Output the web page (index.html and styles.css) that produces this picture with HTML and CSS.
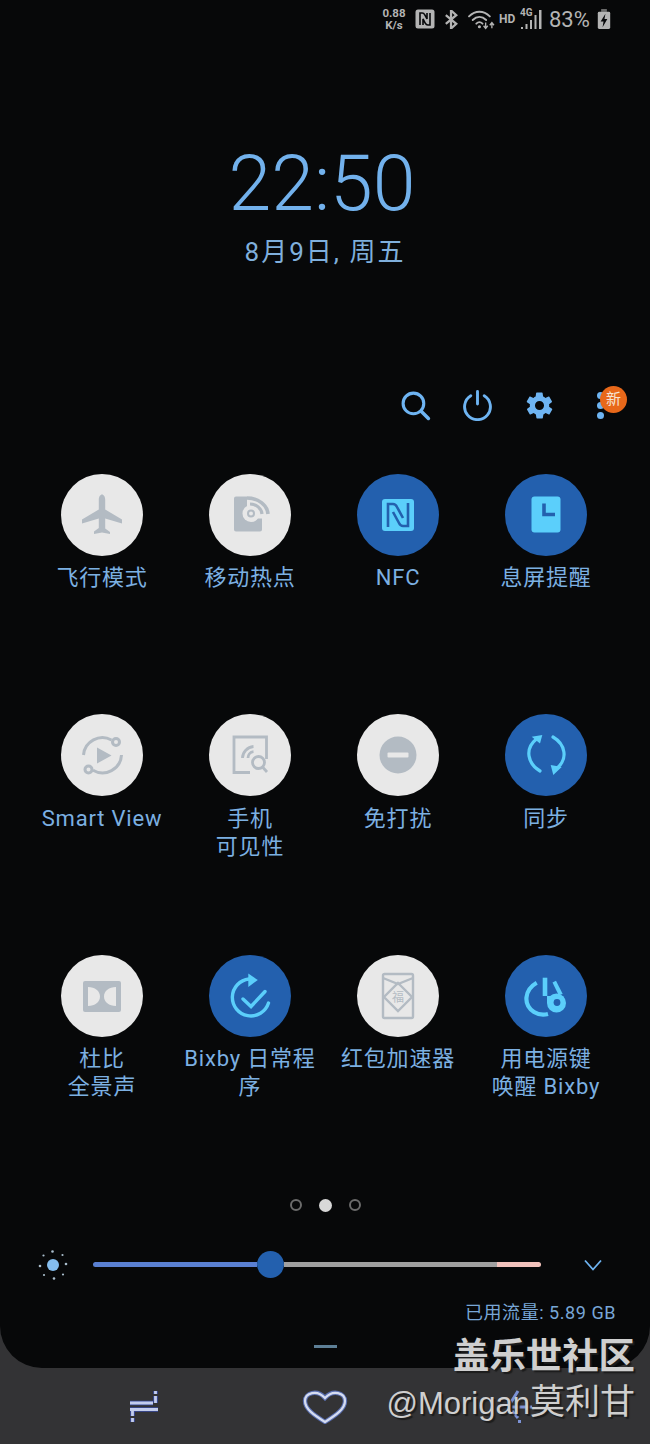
FILE: index.html
```html
<!DOCTYPE html>
<html lang="zh-CN">
  <head>
    <meta charset="UTF-8">
    <meta name="viewport" content="width=device-width, initial-scale=1.0">
    <title>Quick Panel</title>
    <link rel="stylesheet" href="styles.css">
  </head>
  <body>
  <div class="panel">
    <div class="status-bar">
      <div class="net-speed"><span>0.88</span><span>K/s</span></div>
      <svg class="st-nfc" viewBox="0 0 20 20"><rect x="0.5" y="0.5" width="19" height="19" rx="2.5" fill="#b4b4b4"/><path d="M5 16V4h2.200c1.400 0 2 .8 2.600 1.900l2.200 4V4M15 4v12h-2.200c-1.400 0-2-.8-2.600-1.900L8 10v6" fill="none" stroke="#08090b" stroke-width="1.600"/></svg>
      <svg class="st-bt" viewBox="0 0 14 20"><path d="M1 5.500l11 9-5.500 5V.5l5.500 5-11 9" fill="none" stroke="#b4b4b4" stroke-width="2.400"/></svg>
      <svg class="st-wifi" viewBox="0 0 26 20"><g fill="none" stroke="#b4b4b4" stroke-width="1.800" stroke-linecap="round"><path d="M1 7c6-6 14-6 20 0"/><path d="M4.500 10.500c4-4 9-4 13 0"/><path d="M8 14c2-2 4-2 6 0"/></g><circle cx="11" cy="17" r="1.500" fill="#b4b4b4"/><path d="M17 13v5M15 16l2 2.500 2-2.500M23 18.500v-5M21 15.500l2-2.500 2 2.500" fill="none" stroke="#b4b4b4" stroke-width="1.300"/></svg>
      <span class="st-hd">HD</span>
      <div class="st-signal">
        <span class="st-4g">4G</span>
        <svg viewBox="0 0 22 20"><path d="M1 18h2v2H1zM5.500 15h2v5h-2zM10 11h2v9h-2zM14.500 6h2v14h-2zM19 1h2.500v19H19z" fill="#b4b4b4"/></svg>
      </div>
      <span class="st-pct">83%</span>
      <svg class="st-batt" viewBox="0 0 14 22"><path d="M4 0h6v3H4z" fill="#6a6a6a"/><rect x="0.500" y="3" width="13" height="18" rx="1.500" fill="#b4b4b4"/><path d="M8.500 5L3.500 13H6.500L5.500 19L10.500 10.500H7.500z" fill="#08090b"/></svg>
    </div>

    <div class="clock">22:50</div>
    <div class="date">8月9日, 周五</div>

    <div class="actions">
      <svg class="action-icon" viewBox="0 0 30 30"><circle cx="13" cy="13" r="10" fill="none" stroke="#6eb4f2" stroke-width="3"/><path d="M20.500 20.500l7 7" stroke="#6eb4f2" stroke-width="3.400" stroke-linecap="round"/></svg>
      <svg class="action-icon" viewBox="0 0 30 30"><path d="M8.500 5.500a12.500 12.500 0 1 0 13 0" fill="none" stroke="#6eb4f2" stroke-width="2.800" stroke-linecap="round"/><path d="M15 1.500v12" stroke="#6eb4f2" stroke-width="2.800" stroke-linecap="round"/></svg>
      <svg class="action-icon" viewBox="0 0 24 24"><path fill="#6eb4f2" fill-rule="evenodd" d="M19.400 13c.1-.3.100-.7.100-1s0-.7-.1-1l2.100-1.600c.2-.2.200-.4.100-.6l-2-3.500c-.1-.2-.4-.3-.6-.2l-2.500 1c-.5-.4-1.100-.7-1.700-1l-.4-2.700c0-.2-.2-.4-.5-.4h-4c-.3 0-.5.200-.5.400l-.4 2.700c-.6.300-1.200.6-1.700 1l-2.500-1c-.2-.1-.5 0-.6.200l-2 3.500c-.1.200-.1.400.1.600L4.600 11c-.1.300-.1.700-.1 1s0 .7.100 1l-2.100 1.600c-.2.200-.2.400-.1.600l2 3.500c.1.200.4.300.6.200l2.500-1c.5.400 1.100.7 1.700 1l.4 2.700c0 .2.200.4.500.4h4c.3 0 .5-.2.500-.4l.4-2.700c.6-.3 1.200-.6 1.700-1l2.500 1c.2.100.5 0 .6-.2l2-3.500c.1-.2.100-.4-.1-.6zM12 15.500a3.500 3.500 0 1 1 0-7 3.500 3.500 0 0 1 0 7z"/></svg>
      <div class="more">
        <i></i><i></i><i></i>
        <span class="badge">新</span>
      </div>
    </div>

    <div class="tiles">
      <div class="tile">
        <div class="disc"><svg viewBox="0 0 48 48"><path fill="#b3bbc3" d="M24 3.500c1.800 0 3.200 2.500 3.200 5v10l16.800 10v4l-16.800-5v10l4.800 3.500V43L24 41.500 16 43v-2.500l4.800-3.500V27.500L4 32.500v-4l16.800-10v-10c0-2.500 1.400-5 3.200-5z"/></svg></div>
        <div class="label">飞行模式</div>
      </div>
      <div class="tile">
        <div class="disc"><svg viewBox="0 0 48 48"><path fill="#b3bbc3" d="M10 5.500h11v22h15v11a2 2 0 0 1-2 2H10a2 2 0 0 1-2-2v-31a2 2 0 0 1 2-2z"/><circle cx="25" cy="22.500" r="8.500" fill="#e8e8e8"/><circle cx="25" cy="22.500" r="3" fill="none" stroke="#b3bbc3" stroke-width="2"/><g fill="none" stroke="#b3bbc3"><path d="M21 7a21 17 0 0 1 21 16" stroke-width="3.600"/><path d="M24 13a12 11 0 0 1 12 10" stroke-width="3.200"/></g></svg></div>
        <div class="label">移动热点</div>
      </div>
      <div class="tile">
        <div class="disc on"><svg viewBox="0 0 48 48"><rect x="8" y="8" width="32" height="32" rx="3" fill="#5bcffb"/><path d="M14 36V13h5c2 0 3 1 4 3l6 11M34 12v23h-5c-2 0-3-1-4-3l-6-11" fill="none" stroke="#2360ae" stroke-width="2.600"/></svg></div>
        <div class="label">NFC</div>
      </div>
      <div class="tile">
        <div class="disc on"><svg viewBox="0 0 48 48"><rect x="9.500" y="5.500" width="29" height="36" rx="3" fill="#5bcffb"/><path d="M22 12.500v11h11" fill="none" stroke="#2360ae" stroke-width="3.600"/></svg></div>
        <div class="label">息屏提醒</div>
      </div>

      <div class="tile">
        <div class="disc"><svg viewBox="0 0 48 48"><g fill="none" stroke="#b3bbc3" stroke-width="3"><path d="M5.500 24A19 19 0 0 1 33.500 9"/><circle cx="38" cy="11" r="3.500"/><path d="M43.500 24A19 19 0 0 1 15 39.300"/><circle cx="10.500" cy="38.500" r="3.500"/></g><path d="M19 16.500l14.500 8-14.500 8z" fill="#b3bbc3"/></svg></div>
        <div class="label">Smart View</div>
      </div>
      <div class="tile">
        <div class="disc"><svg viewBox="0 0 48 48"><g fill="none" stroke="#b3bbc3" stroke-width="2.800"><path d="M24 41.500H8V6h32.500v22"/><path d="M16.500 27c0-6 5-11 11-11.500"/><path d="M22 27c0-3 2-6 5.500-6.300"/><circle cx="32.500" cy="31.500" r="6"/><path d="M36.500 36l4.500 5"/></g></svg></div>
        <div class="label">手机<br>可见性</div>
      </div>
      <div class="tile">
        <div class="disc"><svg viewBox="0 0 48 48"><circle cx="24" cy="24" r="18.500" fill="#b3bbc3"/><rect x="13.500" y="21.500" width="21" height="5" rx="1" fill="#e8e8e8"/></svg></div>
        <div class="label">免打扰</div>
      </div>
      <div class="tile">
        <div class="disc on"><svg viewBox="0 0 48 48"><g fill="none" stroke="#5bcffb" stroke-width="3.200" stroke-linecap="round"><path d="M18 40C6 33 2 18 14.500 8"/><path d="M31 6c12 7 16 22 3 32"/></g><path d="M9.700 5.700L20.300 4 18 12.500zM28.700 34l11 2-8.400 8z" fill="#5bcffb"/></svg></div>
        <div class="label">同步</div>
      </div>

      <div class="tile">
        <div class="disc"><svg viewBox="0 0 48 48"><rect x="5" y="9" width="38" height="31" rx="2" fill="#b3bbc3"/><path d="M10 15c7 0 12 4 12 9.500S17 34 10 34zM38 15c-7 0-12 4-12 9.500S31 34 38 34z" fill="#e8e8e8"/></svg></div>
        <div class="label">杜比<br>全景声</div>
      </div>
      <div class="tile">
        <div class="disc on"><svg viewBox="0 0 48 48"><g fill="none" stroke="#5bcffb" stroke-width="3.400" stroke-linecap="round"><path d="M42.500 31A18.500 18.500 0 1 1 23 7"/><path d="M17 27l8 7.500 14-15"/></g><path d="M22.300 1.500l9.500 6.500-9.500 7z" fill="#5bcffb"/></svg></div>
        <div class="label">Bixby 日常程序</div>
      </div>
      <div class="tile">
        <div class="disc"><svg viewBox="0 0 48 48"><g fill="none" stroke="#b3bbc3" stroke-width="2.400"><rect x="9" y="2" width="30" height="44" rx="1.500"/><path d="M9 6l15 6 15-6"/><path d="M24 11l14 14-14 14-14-14z"/></g><text x="24" y="30" text-anchor="middle" class="fu">福</text></svg></div>
        <div class="label">红包加速器</div>
      </div>
      <div class="tile">
        <div class="disc on"><svg viewBox="0 0 48 48"><path d="M14.700 10.700C2 18 1 33 12 40c4 2.500 9 3.300 14 2" fill="none" stroke="#5bcffb" stroke-width="4.200"/><path d="M20.700 5.700h4.600V24h-4.600z" fill="#5bcffb"/><path d="M30.500 10.500l3.500-1.800 6.700 13.300-4 1.200z" fill="#5bcffb"/><circle cx="34.500" cy="31" r="9.500" fill="#5bcffb"/><path d="M25 24h4v7h-4z" fill="#5bcffb"/><circle cx="35" cy="30.500" r="3.400" fill="#2360ae"/></svg></div>
        <div class="label">用电源键<br>唤醒 Bixby</div>
      </div>
    </div>

    <div class="pager">
      <span class="dot"></span>
      <span class="dot current"></span>
      <span class="dot"></span>
    </div>

    <div class="brightness">
      <svg class="sun" viewBox="0 0 30 32"><circle cx="15" cy="16" r="6" fill="#85bdee"/><g fill="#a9bdcc"><circle cx="14.500" cy="2.500" r="1.300"/><circle cx="24.500" cy="6" r="1.100"/><circle cx="28" cy="15" r="1.300"/><circle cx="25" cy="25.500" r="1.100"/><circle cx="16" cy="29.500" r="1.300"/><circle cx="6" cy="26" r="1.100"/><circle cx="2" cy="17" r="1.300"/><circle cx="5.500" cy="6.500" r="1.100"/></g></svg>
      <div class="track">
        <div class="track-fill"></div>
        <div class="thumb"></div>
        <div class="track-rest"></div>
        <div class="track-high"></div>
      </div>
      <svg class="chevron" viewBox="0 0 20 14"><path d="M2 2.500l8 9 8-9" fill="none" stroke="#6eb4f2" stroke-width="1.800"/></svg>
    </div>

    <div class="data-usage">已用流量: 5.89 GB</div>
    <div class="handle"></div>
  </div>

  <div class="nav">
    <svg class="nav-recent" viewBox="0 0 30 34"><g fill="none" stroke="#3a4ca0" stroke-width="4.600"><path d="M1 14H24M1 20.500H29M26.500 2v3M26.500 7v7M3.500 22v5M3.500 29v4"/></g><g fill="none" stroke="#c3cdec" stroke-width="2.800"><path d="M1 14H24M1 20.500H29M26.500 2v3M26.500 7v7M3.500 22v5M3.500 29v4"/></g></svg>
    <svg class="nav-home" viewBox="0 0 46 36"><path d="M23 34C12 27 3 21 3 13 3 5 15 1 23 10 31 1 43 5 43 13c0 8-9 14-20 21z" fill="none" stroke="#5a6fb0" stroke-width="4.400"/><path d="M23 34C12 27 3 21 3 13 3 5 15 1 23 10 31 1 43 5 43 13c0 8-9 14-20 21z" fill="none" stroke="#d5dcf0" stroke-width="2.200"/></svg>
    <svg class="nav-back" viewBox="0 0 30 38"><path d="M14 4L4 20M4 20h24M8 24l6 7" fill="none" stroke="#7d93d6" stroke-width="3"/><path d="M14 33h3v3h-3z" fill="#7d93d6"/></svg>
  </div>

  <div class="mark-title">盖乐世社区</div>
  <div class="mark-user">@Morigan<span class="mark-cjk">莫利甘</span></div>
</body>
</html>
```

FILE: styles.css
```css
html, body {
  margin: 0;
  padding: 0;
}

body {
  position: relative;
  width: 650px;
  height: 1444px;
  overflow: hidden;
  background: #333335;
  font-family: Roboto, "Noto Sans CJK SC", sans-serif;
  color: #7cb0e2;
}

.panel {
  height: 1368px;
  box-sizing: border-box;
  display: flex;
  flex-direction: column;
  background: #070809;
  border-radius: 0 0 42px 42px;
}

/* status bar */
.status-bar {
  height: 38px;
  display: flex;
  align-items: center;
  justify-content: flex-end;
  padding: 0 39px 0 0;
  color: #b4b4b4;
}

.net-speed {
  display: flex;
  flex-direction: column;
  align-items: center;
  font-size: 11.500px;
  line-height: 12px;
  font-weight: 700;
  width: 26px;
  margin-right: 8px;
}

.st-nfc {
  width: 20px;
  height: 20px;
  margin-right: 9px;
}

.st-bt {
  width: 15px;
  height: 19px;
  margin-right: 9px;
}

.st-wifi {
  width: 27px;
  height: 21px;
  margin-right: 4px;
}

.st-hd {
  font-size: 12px;
  font-weight: 700;
  width: 17px;
  margin-right: 4px;
}

.st-signal {
  position: relative;
  width: 22px;
  height: 20px;
  margin-right: 7px;
}

.st-signal svg {
  display: block;
  width: 22px;
  height: 20px;
}

.st-4g {
  position: absolute;
  left: 0;
  top: -2px;
  font-size: 10px;
  line-height: 11px;
  font-weight: 700;
}

.st-pct {
  font-size: 22px;
  width: 43px;
  margin-right: 5px;
}

.st-batt {
  width: 14px;
  height: 21px;
}

/* clock */
.clock {
  margin-top: 102px;
  padding-right: 6px;
  text-align: center;
  font-size: 77px;
  line-height: 88px;
  font-weight: 300;
  color: #72b1ec;
}

.date {
  margin-top: 5px;
  text-align: center;
  font-size: 26px;
  line-height: 38px;
  letter-spacing: 2px;
  color: #7fafdc;
}

/* search, power, settings, more */
.actions {
  margin-top: 117px;
  height: 34px;
  display: flex;
  align-items: center;
  justify-content: flex-end;
  gap: 31px;
  padding-right: 34.500px;
}

.action-icon {
  width: 31px;
  height: 31px;
}

.more {
  position: relative;
  width: 25px;
  height: 34px;
  margin-left: 5px;
  display: flex;
  flex-direction: column;
  align-items: flex-start;
  justify-content: center;
  gap: 3px;
}

.more i {
  width: 7px;
  height: 7px;
  margin-left: 6px;
  border-radius: 50%;
  background: #6eb4f2;
}

.badge {
  position: absolute;
  left: 9.500px;
  top: -2px;
  width: 27px;
  height: 27px;
  border-radius: 50%;
  background: #e8681a;
  color: #f6e3d3;
  font-size: 15px;
  line-height: 27px;
  text-align: center;
}

/* quick setting tiles */
.tiles {
  margin-top: 51.500px;
  padding: 0 28px;
  display: grid;
  grid-template-columns: repeat(4, 148px);
  grid-auto-rows: 240.500px;
}

.tile {
  display: flex;
  flex-direction: column;
  align-items: center;
}

.disc {
  width: 82px;
  height: 82px;
  flex: none;
  display: flex;
  align-items: center;
  justify-content: center;
  border-radius: 50%;
  background: #e8e8e8;
}

.disc.on {
  background: #2360ae;
}

.disc svg {
  width: 48px;
  height: 48px;
}

.fu {
  font-size: 12px;
  fill: #b3bbc3;
}

.label {
  margin-top: 8.500px;
  width: 140px;
  text-align: center;
  font-size: 22px;
  line-height: 28px;
  letter-spacing: 0.8px;
}

/* page dots */
.pager {
  margin-top: 3px;
  height: 14px;
  display: flex;
  justify-content: center;
  align-items: center;
  gap: 17px;
}

.dot {
  width: 12px;
  height: 12px;
  box-sizing: border-box;
  border: 2px solid #6b6b6b;
  border-radius: 50%;
}

.dot.current {
  width: 13px;
  height: 13px;
  border: 0;
  background: #d8d8d8;
}

/* brightness */
.brightness {
  margin-top: 37.500px;
  height: 30px;
  display: flex;
  align-items: center;
  padding-left: 38px;
}

.sun {
  width: 30px;
  height: 32px;
  margin-right: 25px;
}

.track {
  display: flex;
  align-items: center;
  width: 448px;
}

.track-fill {
  width: 164px;
  height: 5px;
  background: #5a80d2;
  border-radius: 3px 0 0 3px;
}

.thumb {
  width: 27px;
  height: 27px;
  flex: none;
  border-radius: 50%;
  background: #2360ae;
}

.track-rest {
  flex: 1;
  height: 5px;
  background: #a0a0a0;
}

.track-high {
  width: 44px;
  height: 5px;
  background: #f2c2bc;
  border-radius: 0 3px 3px 0;
}

.chevron {
  width: 20px;
  height: 14px;
  margin-left: 42px;
}

.data-usage {
  margin-top: 20px;
  padding-right: 34px;
  text-align: right;
  font-size: 18px;
  line-height: 26px;
  letter-spacing: 0.55px;
  color: #78a6d6;
}

.handle {
  width: 23px;
  height: 3px;
  margin: 19px auto 0;
  background: #5d7f96;
}

/* bottom nav */
.nav {
  height: 76px;
  display: flex;
  align-items: center;
  padding-left: 129px;
}

.nav-recent {
  width: 30px;
  height: 34px;
  margin-right: 143px;
}

.nav-home {
  width: 46px;
  height: 36px;
  margin-right: 156px;
}

.nav-back {
  width: 30px;
  height: 38px;
}

/* forum watermark */
.mark-title,
.mark-user {
  position: absolute;
  right: 15px;
  color: #cfcfcf;
  white-space: nowrap;
  font-family: "Liberation Sans", "Noto Sans CJK SC", sans-serif;
  text-shadow: 2px 2px 1px #1c1c1c;
}

.mark-title {
  top: 1334px;
  font-size: 36.400px;
  line-height: 46px;
  font-weight: 700;
}

.mark-user {
  top: 1382px;
  font-size: 31px;
  line-height: 40px;
}

.mark-cjk {
  font-size: 35px;
}
```
